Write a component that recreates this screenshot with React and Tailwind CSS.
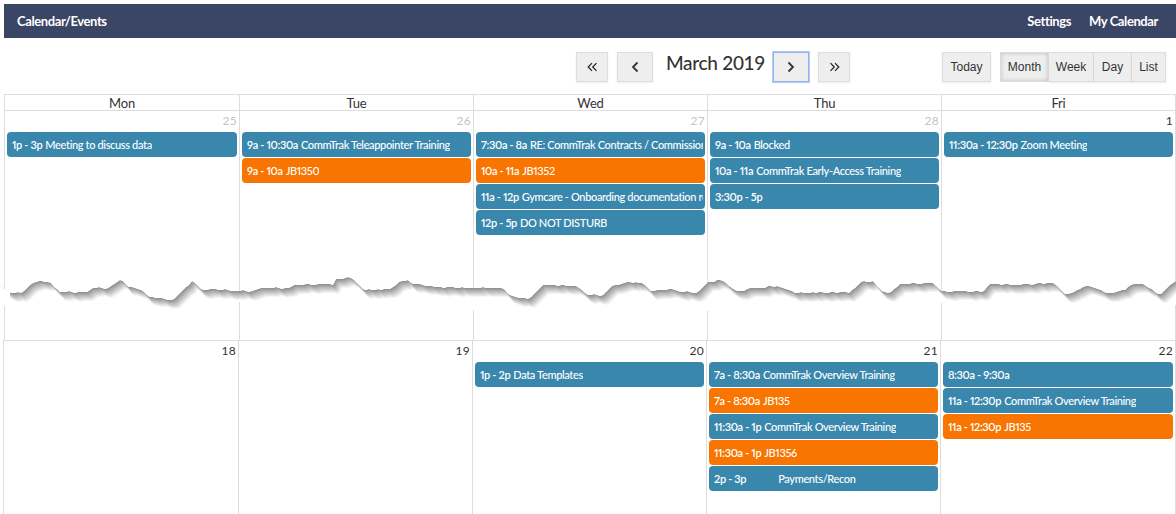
import React from 'react';

const BLUE = 'bg-[#3a87ad]';
const ORANGE = 'bg-[#f77500]';

// rough outline of the torn edge, read off the screenshot
const EDGE = [
  [0, 286], [10, 293], [17, 292], [22, 293], [32, 283], [42, 281], [50, 283], [60, 292], [80, 292], [88, 292], [93, 288],
  [108, 288], [122, 279], [128, 287], [138, 288], [150, 297], [167, 299], [173, 300], [192, 281], [203, 290], [217, 289],
  [233, 291], [253, 291], [260, 288], [290, 288], [292, 285], [333, 284], [335, 280], [350, 277], [365, 290], [390, 289],
  [400, 282], [408, 280], [412, 284], [427, 285], [433, 287], [477, 288], [503, 288], [512, 297], [530, 299], [542, 285],
  [577, 286], [588, 295], [603, 295], [612, 286], [630, 282], [642, 283], [652, 291], [672, 289], [677, 291], [697, 293],
  [708, 282], [722, 280], [737, 292], [747, 289], [777, 286], [797, 293], [843, 292], [850, 293], [860, 282], [873, 281],
  [882, 292], [892, 292], [900, 284], [933, 283], [943, 292], [963, 291], [983, 292], [990, 284], [1000, 284], [1013, 285],
  [1053, 283], [1067, 295], [1085, 286], [1097, 288], [1105, 293], [1120, 292], [1133, 284], [1143, 284], [1160, 295], [1176, 280],
];
// grid lines come back at slightly different heights under the tear
const BOTTOM = '1176,305 1172,305 1172,325 943,325 943,303 937,303 937,325 709,325 709,311 703,311 703,325 475,325 475,310 469,310 469,325 241,325 241,302 235,302 235,325 6,325 6,306 0,306';

const edgeAt = (x) => {
  for (let i = 1; i < EDGE.length; i++) {
    if (x <= EDGE[i][0]) {
      const [x0, y0] = EDGE[i - 1];
      const [x1, y1] = EDGE[i];
      return y0 + ((y1 - y0) * (x - x0)) / (x1 - x0);
    }
  }
  return EDGE[EDGE.length - 1][1];
};

// interpolate every 3px and add a little jitter so it reads as ripped paper
const JAGGED = [];
for (let x = 0; x <= 1176; x += 3) {
  const jitter = (Math.sin(x * 1.7) + Math.sin(x * 0.61)) * 0.35;
  JAGGED.push([x, Math.round(edgeAt(x) + jitter)]);
}
const EDGE_POINTS = JAGGED.map((p) => p.join(',')).join(' ');
const SHADES = Array.from({ length: 11 }, (_, i) => i);

const TornEdge = () => (
  <svg className="absolute left-0 top-[270px]" width="1176" height="60" viewBox="0 270 1176 60">
    <defs>
      <clipPath id="tear">
        <polygon points={`${EDGE_POINTS} ${BOTTOM}`} />
      </clipPath>
    </defs>
    <g clipPath="url(#tear)">
      <rect x="0" y="270" width="1176" height="60" fill="#ffffff" />
      {SHADES.map((i) => {
        const level = Math.min(255, 146 + i * 11);
        return (
          <polygon
            key={i}
            points={`-20,270 -20,${286 + i} ${JAGGED.map(([x, y]) => `${x + i * 0.6},${y + i * 0.9}`).join(' ')} 1200,${280 + i} 1200,330 -20,330`}
            fill={i === 10 ? '#ffffff' : `rgb(${level},${level},${level})`}
          />
        );
      })}
      <rect x="0" y="270" width="10" height="60" fill="#ffffff" />
    </g>
  </svg>
);

const Event = ({ time, title, orange, gap }) => (
  <div className={`h-[25px] mb-px pt-px rounded-[4px] flex items-center pl-[5px] pr-[2px] overflow-hidden whitespace-nowrap text-[11px] tracking-[-0.35px] proportional-nums text-white ${orange ? ORANGE : BLUE}`}>
    <span className="font-semibold shrink-0">{time}</span>
    {title && <span className={`font-medium ${gap ? 'ml-[32px]' : 'ml-[3px]'} overflow-hidden`}>{title}</span>}
  </div>
);

const DayCell = ({ day, muted, events = [], last }) => (
  <div className={`border-l border-[#ddd] px-[2px] ${last ? 'border-r' : ''}`}>
    <div className={`h-[21px] text-right text-[12px] tracking-[0.3px] leading-[20px] ${muted ? 'text-[#c4c4c4]' : 'text-[#333]'}`}>{day}</div>
    {events.map((ev, i) => (
      <Event key={i} {...ev} />
    ))}
  </div>
);

const NavBtn = ({ className = '', children }) => (
  <div className={`h-[30px] flex items-center justify-center bg-[#eee] border border-[#ddd] shadow-[0_1px_2px_rgba(0,0,0,0.08)] text-[#333] ${className}`}>
    {children}
  </div>
);

const Single = ({ left }) => (
  <svg width="10" height="12" viewBox="0 0 10 12" fill="none" stroke="#333" strokeWidth="1.8">
    <path d={left ? 'M7.5 1.5 3 6l4.5 4.5' : 'M2.5 1.5 7 6l-4.5 4.5'} />
  </svg>
);

const Double = ({ left }) => (
  <svg width="11" height="10" viewBox="0 0 11 10" fill="none" stroke="#222" strokeWidth="1.2">
    <path d={left ? 'M5 1.2 1.2 5 5 8.8M9.5 1.2 5.7 5l3.8 3.8' : 'M1.5 1.2 5.3 5 1.5 8.8M6 1.2 9.8 5 6 8.8'} />
  </svg>
);

const week1 = [
  { day: 25, muted: true, events: [{ time: '1p - 3p', title: 'Meeting to discuss data' }] },
  {
    day: 26,
    muted: true,
    events: [
      { time: '9a - 10:30a', title: 'CommTrak Teleappointer Training' },
      { time: '9a - 10a', title: 'JB1350', orange: true },
    ],
  },
  {
    day: 27,
    muted: true,
    events: [
      { time: '7:30a - 8a', title: 'RE: CommTrak Contracts / Commissions' },
      { time: '10a - 11a', title: 'JB1352', orange: true },
      { time: '11a - 12p', title: 'Gymcare - Onboarding documentation review' },
      { time: '12p - 5p', title: 'DO NOT DISTURB' },
    ],
  },
  {
    day: 28,
    muted: true,
    events: [
      { time: '9a - 10a', title: 'Blocked' },
      { time: '10a - 11a', title: 'CommTrak Early-Access Training' },
      { time: '3:30p - 5p' },
    ],
  },
  { day: 1, last: true, events: [{ time: '11:30a - 12:30p', title: 'Zoom Meeting' }] },
];

const week2 = [
  { day: 18 },
  { day: 19 },
  { day: 20, events: [{ time: '1p - 2p', title: 'Data Templates' }] },
  {
    day: 21,
    events: [
      { time: '7a - 8:30a', title: 'CommTrak Overview Training' },
      { time: '7a - 8:30a', title: 'JB135', orange: true },
      { time: '11:30a - 1p', title: 'CommTrak Overview Training' },
      { time: '11:30a - 1p', title: 'JB1356', orange: true },
      { time: '2p - 3p', title: 'Payments/Recon', gap: true },
    ],
  },
  {
    day: 22,
    last: true,
    events: [
      { time: '8:30a - 9:30a' },
      { time: '11a - 12:30p', title: 'CommTrak Overview Training' },
      { time: '11a - 12:30p', title: 'JB135', orange: true },
    ],
  },
];

export default function App() {
  return (
    <div className="relative h-[514px] w-[1176px] overflow-hidden bg-white font-['Lato',sans-serif] text-[#333]">
      <div className="h-[4px]" />
      {/* navbar */}
      <div className="ml-[4px] h-[34px] pt-px bg-[#3b4565] flex items-center justify-between pl-[13px] pr-[18px] text-[13px] tracking-[-0.4px] font-bold text-white">
        <span>Calendar/Events</span>
        <div className="flex gap-[18px]">
          <span>Settings</span>
          <span>My Calendar</span>
        </div>
      </div>

      {/* toolbar */}
      <div className="h-[56px] flex items-start pt-[14px] pl-[576px] pr-[10px]">
        <NavBtn className="w-[32px]"><Double left /></NavBtn>
        <NavBtn className="w-[36px] ml-[9px]"><Single left /></NavBtn>
        <div className="w-[120px] pl-[5px] text-center text-[19px] tracking-[-0.3px] font-medium leading-[22px] text-[#333]">March 2019</div>
        <NavBtn className="w-[36px] !border-[#8fb4ee] ring-1 ring-[#b5cdf5]"><Single /></NavBtn>
        <NavBtn className="w-[32px] ml-[9px]"><Double /></NavBtn>

        <div className="ml-auto flex font-['Liberation_Sans',sans-serif] text-[12px]">
          <NavBtn className="w-[49px] mr-[9px]">Today</NavBtn>
          <NavBtn className="w-[49px] shadow-[inset_0_0_4px_rgba(0,0,0,0.2)]">Month</NavBtn>
          <NavBtn className="w-[45px] border-l-0">Week</NavBtn>
          <NavBtn className="w-[38px] border-l-0">Day</NavBtn>
          <NavBtn className="w-[34px] border-l-0">List</NavBtn>
        </div>
      </div>

      {/* day names */}
      <div className="ml-[4px] grid grid-cols-[235px_234px_234px_234px_235px] h-[17px] border-t border-b border-[#ddd] text-[13px] tracking-[-0.2px] leading-[16px] text-center">
        {['Mon', 'Tue', 'Wed', 'Thu', 'Fri'].map((name, i) => (
          <div key={name} className={`border-l border-[#ddd] ${i === 4 ? 'border-r' : ''}`}>{name}</div>
        ))}
      </div>

      {/* first week */}
      <div className="ml-[4px] grid grid-cols-[235px_234px_234px_234px_235px] h-[229px]">
        {week1.map((cell) => (
          <DayCell key={cell.day} {...cell} />
        ))}
      </div>

      {/* second week, one pixel off because the picture was spliced */}
      <div className="ml-[3px] grid grid-cols-[235px_234px_234px_234px_236px] h-[174px] border-t border-[#ddd]">
        {week2.map((cell) => (
          <DayCell key={cell.day} {...cell} />
        ))}
      </div>

      <TornEdge />
    </div>
  );
}
